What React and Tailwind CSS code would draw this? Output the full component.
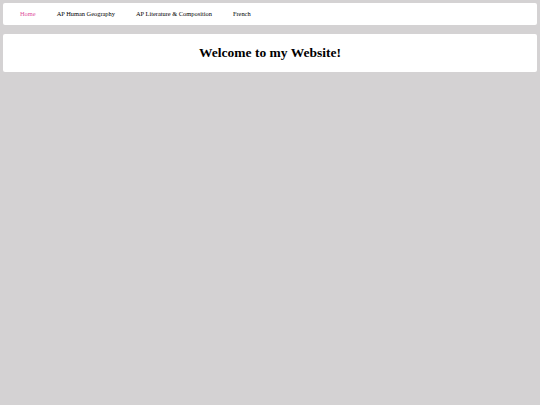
export default function App() {
  const links = [
    { label: "Home", active: true },
    { label: "AP Human Geography" },
    { label: "AP Literature & Composition" },
    { label: "French" },
  ];

  return (
    <div
      className="min-h-[405px] w-full bg-[#d4d2d3] px-[3px] pt-[3px]"
      style={{ fontFamily: '"Liberation Serif", "Times New Roman", serif' }}
    >
      {/* Nav bar */}
      <nav className="flex h-[22px] items-center gap-[21px] rounded-[2px] bg-white pl-[17px]">
        {links.map((l) => (
          <a
            key={l.label}
            href="#"
            className={`text-[6.4px] leading-none ${l.active ? "text-[#e0529c]" : "text-black"}`}
          >
            {l.label}
          </a>
        ))}
      </nav>

      {/* Header */}
      <header className="mt-[9px] flex h-[38px] items-center justify-center rounded-[2px] bg-white">
        <h1 className="text-[13.5px] font-bold leading-none text-black">Welcome to my Website!</h1>
      </header>
    </div>
  );
}
